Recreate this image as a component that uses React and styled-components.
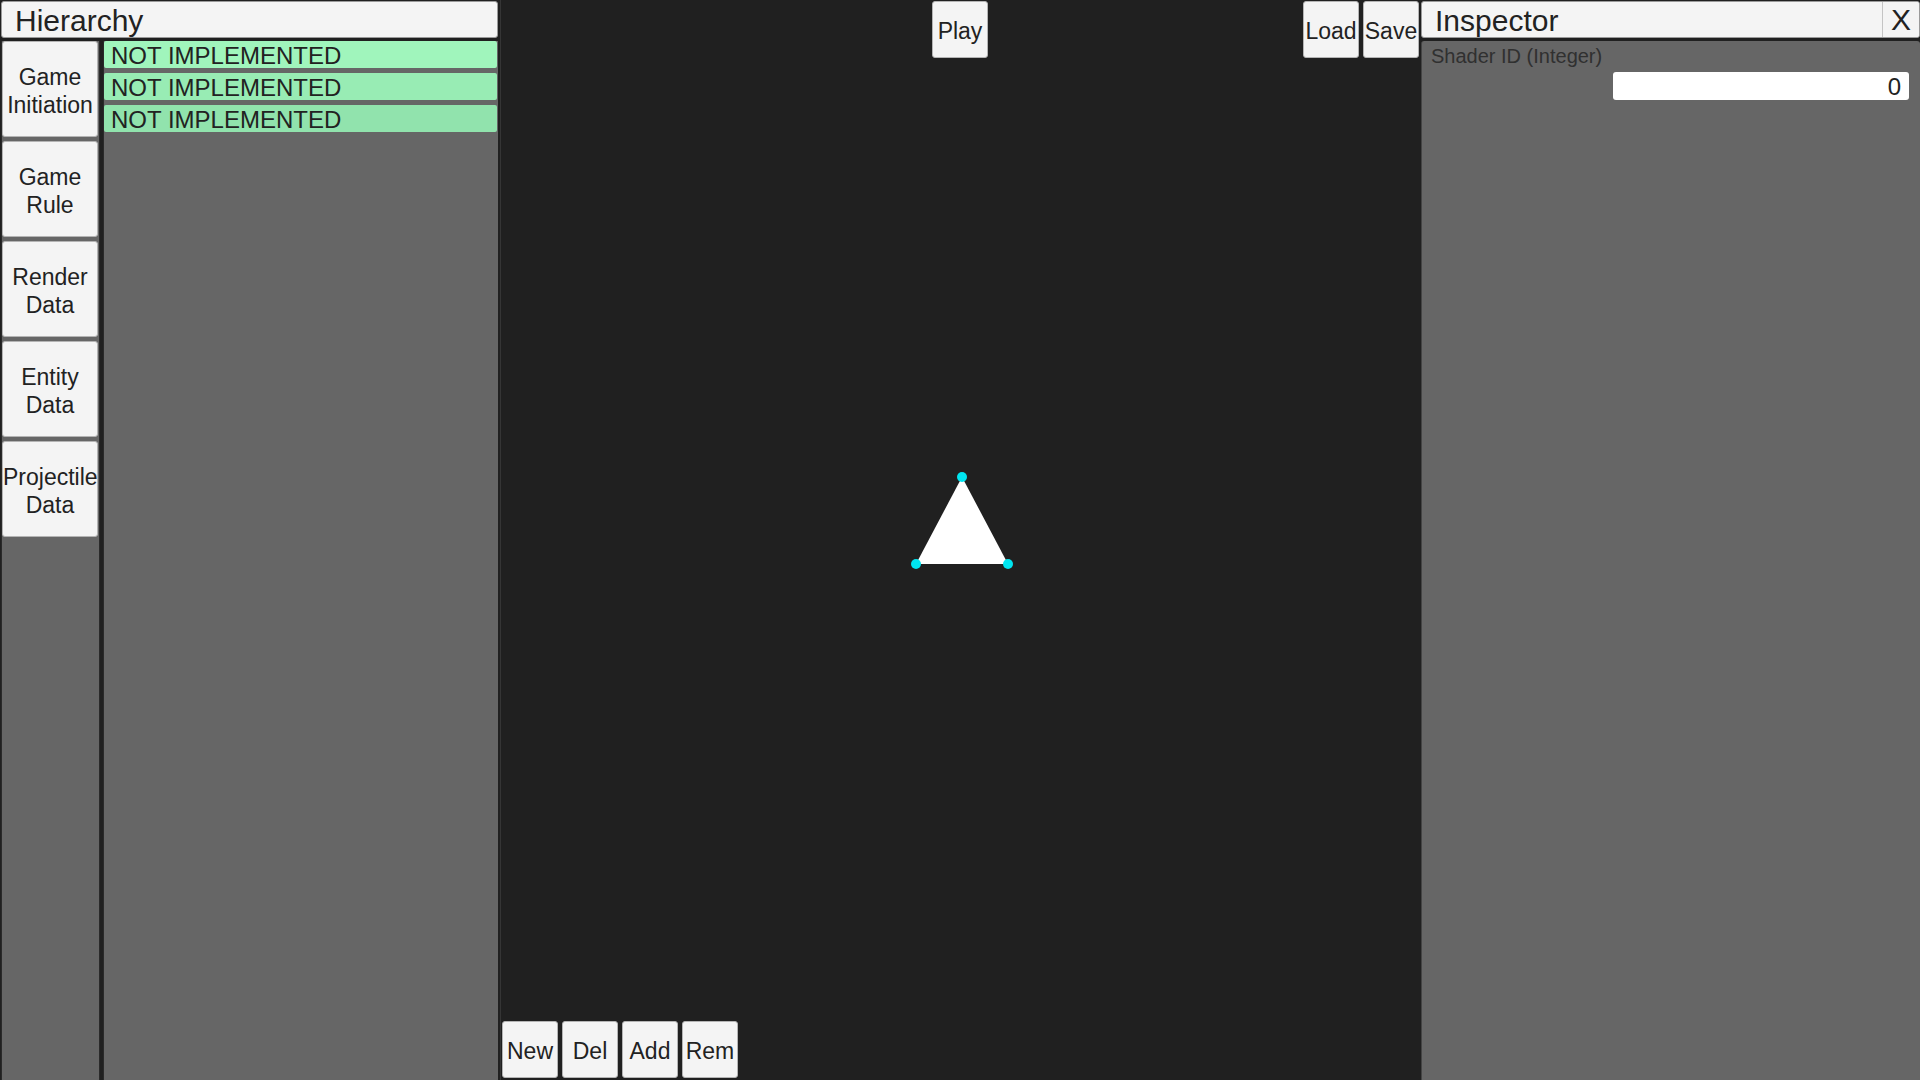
import React from 'react';
import styled, { createGlobalStyle } from 'styled-components';

const colors = {
  page: '#202020',
  panel: '#666666',
  edge: '#2a2a2a',
  button: '#f4f4f4',
  buttonEdge: '#b4b4b4',
  text: '#222222',
  label: '#303030',
};

const GlobalStyle = createGlobalStyle`
  html, body {
    margin: 0;
    padding: 0;
    background: ${colors.page};
  }
  body {
    font-family: "Liberation Sans", Arial, sans-serif;
    color: ${colors.text};
  }
`;

const Layout = styled.div`
  display: grid;
  grid-template-columns: 500px 1fr 500px;
  width: 1920px;
  height: 1080px;
  overflow: hidden;
`;

const SidePanel = styled.section`
  display: flex;
  flex-direction: column;
  gap: 3px;
  padding: 1px ${p => (p.right ? '0 0 1px' : '2px 0 1px')};
  min-height: 0;
`;

const Header = styled.header`
  display: flex;
  align-items: center;
  height: 37px;
  box-sizing: border-box;
  background: ${colors.button};
  border: 1px solid #9a9a9a;
  border-radius: 3px;
  font-size: 30px;
  padding: 2px 0 0 13px;
  overflow: hidden;
`;

const HeaderTitle = styled.span`
  flex: 1;
`;

const CloseButton = styled.button`
  align-self: stretch;
  width: 37px;
  margin-top: -2px;
  border: none;
  border-left: 1px solid #c4c4c4;
  background: ${colors.button};
  font-family: inherit;
  font-size: 30px;
  color: ${colors.text};
  padding: 0;
`;

const LeftBody = styled.div`
  flex: 1;
  display: flex;
  gap: 3px;
  min-height: 0;
`;

const TabColumn = styled.nav`
  width: 97px;
  background: ${colors.panel};
  border-left: 1px solid ${colors.edge};
  border-right: 1px solid ${colors.edge};
  display: flex;
  flex-direction: column;
  gap: 4px;
`;

const Tab = styled.button`
  height: 96px;
  width: 96px;
  padding: 4px 0 0;
  background: ${colors.button};
  border: 1px solid ${colors.buttonEdge};
  border-radius: 3px;
  font-family: inherit;
  font-size: 23px;
  line-height: 28px;
  color: ${colors.text};
  white-space: pre-line;
  overflow: visible;
`;

const ListPanel = styled.div`
  flex: 1;
  background: ${colors.panel};
  border-left: 1px solid ${colors.edge};
  display: flex;
  flex-direction: column;
  gap: 5px;
  padding-right: 1px;
`;

const ListRow = styled.div`
  height: 27px;
  display: flex;
  align-items: center;
  padding: 2px 0 0 7px;
  box-sizing: border-box;
  background: ${p => p.tint};
  border-radius: 2px;
  font-size: 24px;
  color: ${colors.text};
`;

const Viewport = styled.main`
  position: relative;
  display: flex;
  flex-direction: column;
  justify-content: space-between;
  border-left: 1px solid #353535;
`;

const Scene = styled.svg`
  position: absolute;
  inset: 0;
  width: 100%;
  height: 100%;
`;

const TopBar = styled.div`
  position: relative;
  display: grid;
  grid-template-columns: 1fr auto 1fr;
  padding: 1px 1px 0 0;
`;

const ButtonGroup = styled.div`
  display: flex;
  gap: 4px;
  justify-self: ${p => p.align || 'start'};
`;

const ToolButton = styled.button`
  width: 56px;
  height: 57px;
  padding: 4px 0 0;
  background: ${colors.button};
  border: 1px solid ${colors.buttonEdge};
  border-radius: 3px;
  font-family: inherit;
  font-size: 23px;
  color: ${colors.text};
  white-space: nowrap;
  overflow: visible;
`;

const BottomBar = styled.div`
  position: relative;
  display: flex;
  padding: 0 0 2px 1px;
`;

const InspectorBody = styled.div`
  flex: 1;
  background: ${colors.panel};
  border-radius: 3px 3px 0 0;
  border-left: 1px solid #444;
  padding: 3px 11px 0 9px;
  display: flex;
  flex-direction: column;
`;

const FieldLabel = styled.div`
  font-size: 20px;
  color: ${colors.label};
  line-height: 24px;
`;

const NumberField = styled.div`
  align-self: flex-end;
  width: 296px;
  height: 28px;
  margin-top: 4px;
  box-sizing: border-box;
  background: #ffffff;
  border-radius: 3px;
  font-size: 24px;
  text-align: right;
  line-height: 30px;
  padding-right: 8px;
`;

const tabs = ['Game\nInitiation', 'Game\nRule', 'Render\nData', 'Entity\nData', 'Projectile\nData'];
const rows = ['#a0f5bc', '#98ecb4', '#91e3ad'];

const Triangle = () => {
  const pts = [
    [461, 477],
    [415, 564],
    [507, 564],
  ];
  return (
    <Scene viewBox="0 0 919 1080" preserveAspectRatio="xMinYMin meet">
      <polygon points={pts.map(p => p.join(',')).join(' ')} fill="#ffffff" />
      {pts.map(([x, y]) => (
        <circle key={x + '-' + y} cx={x} cy={y} r="5" fill="#00e5f0" />
      ))}
    </Scene>
  );
};

export default function App() {
  return (
    <>
      <GlobalStyle />
      <Layout>
        <SidePanel>
          <Header>
            <HeaderTitle>Hierarchy</HeaderTitle>
          </Header>
          <LeftBody>
            <TabColumn>
              {tabs.map(t => (
                <Tab key={t}>{t}</Tab>
              ))}
            </TabColumn>
            <ListPanel>
              {rows.map((tint, i) => (
                <ListRow key={i} tint={tint}>NOT IMPLEMENTED</ListRow>
              ))}
            </ListPanel>
          </LeftBody>
        </SidePanel>

        <Viewport>
          <Triangle />
          <TopBar>
            <span />
            <ToolButton>Play</ToolButton>
            <ButtonGroup align="end">
              <ToolButton>Load</ToolButton>
              <ToolButton>Save</ToolButton>
            </ButtonGroup>
          </TopBar>
          <BottomBar>
            <ButtonGroup>
              <ToolButton>New</ToolButton>
              <ToolButton>Del</ToolButton>
              <ToolButton>Add</ToolButton>
              <ToolButton>Rem</ToolButton>
            </ButtonGroup>
          </BottomBar>
        </Viewport>

        <SidePanel right>
          <Header>
            <HeaderTitle>Inspector</HeaderTitle>
            <CloseButton>X</CloseButton>
          </Header>
          <InspectorBody>
            <FieldLabel>Shader ID (Integer)</FieldLabel>
            <NumberField>0</NumberField>
          </InspectorBody>
        </SidePanel>
      </Layout>
    </>
  );
}
